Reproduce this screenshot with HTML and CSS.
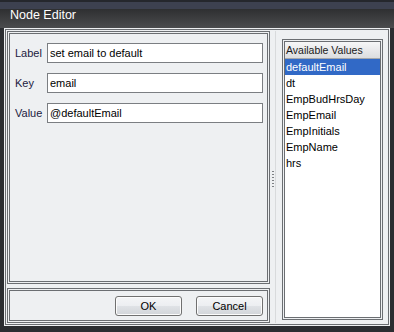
FILE: index.html
```html
<!DOCTYPE html>
<html lang="en">
<head>
  <meta charset="UTF-8">
  <title>Node Editor</title>
  <link rel="stylesheet" href="styles.css">
</head>
<body>
  <div class="window">
    <div class="titlebar">Node Editor</div>
    <div class="client">
      <div class="frame">
        <div class="left">
          <div class="form-panel">
            <label class="field-label">Label</label>
            <input class="field-input" type="text" value="set email to default">
            <label class="field-label">Key</label>
            <input class="field-input" type="text" value="email">
            <label class="field-label">Value</label>
            <input class="field-input" type="text" value="@defaultEmail">
          </div>
          <div class="button-panel">
            <button class="btn">OK</button>
            <button class="btn">Cancel</button>
          </div>
        </div>
        <div class="splitter"><span class="grip"></span></div>
        <div class="right">
          <div class="list-box">
            <div class="list-head">Available Values</div>
            <ul class="values">
              <li class="selected">defaultEmail</li>
              <li>dt</li>
              <li>EmpBudHrsDay</li>
              <li>EmpEmail</li>
              <li>EmpInitials</li>
              <li>EmpName</li>
              <li>hrs</li>
            </ul>
          </div>
        </div>
      </div>
    </div>
  </div>
</body>
</html>
```

FILE: styles.css
```css
* {
  margin: 0;
  padding: 0;
  box-sizing: border-box;
}
body {
  font-family: 'Liberation Sans', Arial, sans-serif;
  font-size: 11px;
  background: #2b2d31;
  width: 394px;
  height: 332px;
  overflow: hidden;
}
.window {
  width: 394px;
  height: 332px;
  display: flex;
  flex-direction: column;
  background: #2b2d31;
}
.titlebar {
  height: 28px;
  padding: 3px 0 0 10px;
  line-height: 25px;
  font-size: 12.5px;
  color: #fff;
  background: linear-gradient(to bottom, #25272d 0, #25272d 2px, #3d4150 2px, #3d4150 9px, #2e2f31 9px, #4b4c4e 28px);
}
.client {
  flex: 1;
  margin: 0 4px 6px;
  padding: 1px;
  background: #eef0f2;
  display: flex;
}
.frame {
  flex: 1;
  border: 1px solid #6b6e72;
  padding: 1px;
  display: flex;
}
.left {
  width: 263px;
  display: flex;
  flex-direction: column;
  gap: 4px;
}
.form-panel {
  height: 253px;
  border: 3px double #6b6e72;
  padding: 9px 4px 0 5px;
  display: grid;
  grid-template-columns: 32px 1fr;
  grid-auto-rows: 20px;
  row-gap: 10px;
  align-items: center;
}
.field-label {
  color: #1c2040;
}
.field-input {
  height: 20px;
  border: 1px solid #7b7e82;
  background: #fff;
  padding: 0 2px;
  font-family: inherit;
  font-size: 11px;
  color: #000;
  outline: none;
}
.button-panel {
  flex: 1;
  border: 3px double #6b6e72;
  display: flex;
  align-items: center;
  justify-content: flex-end;
  gap: 14px;
  padding-right: 4px;
}
.btn {
  width: 67px;
  height: 20px;
  border: 1px solid #707070;
  border-radius: 3px;
  background: linear-gradient(to bottom, #f4f5f7 0, #eceef1 50%, #dfe2e6 50%, #d2d5d9 100%);
  box-shadow: inset 0 0 0 1px #fcfcfc;
  font-family: inherit;
  font-size: 11px;
  color: #000;
}
.splitter {
  width: 6px;
  border-right: 1px solid #d8dadc;
  display: flex;
  align-items: center;
  justify-content: center;
}
.grip {
  width: 2px;
  height: 17px;
  margin-top: 4px;
  background: repeating-linear-gradient(to bottom, #7d8084 0, #7d8084 1px, transparent 1px, transparent 3px);
}
.right {
  flex: 1;
  padding: 8px 4px 3px 6px;
  display: flex;
}
.list-box {
  flex: 1;
  border: 3px double #6b6e72;
  background: #fff;
  background-clip: padding-box;
  display: flex;
  flex-direction: column;
}
.list-head {
  height: 17px;
  line-height: 16px;
  padding-left: 1px;
  font-size: 10.5px;
  color: #1a1a1a;
  background: linear-gradient(to bottom, #f6f6f7, #dcdddf);
  border-bottom: 1px solid #a5a7aa;
}
.values {
  list-style: none;
}
.values li {
  height: 16px;
  line-height: 16px;
  padding-left: 1px;
  color: #000;
}
.values li.selected {
  background: #3169c6;
  color: #fff;
}
```
